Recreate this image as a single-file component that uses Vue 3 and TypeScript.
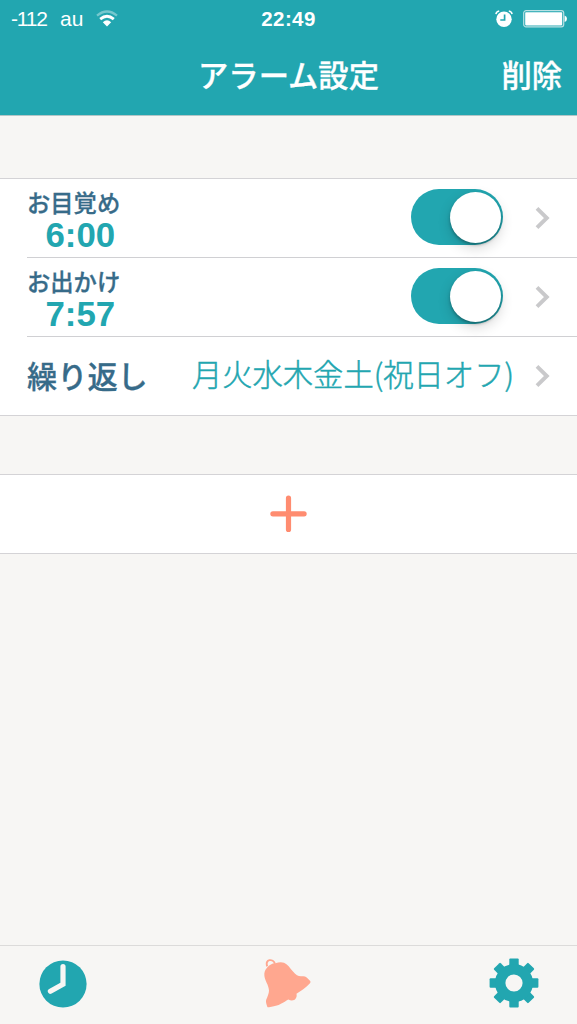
<script setup lang="ts">
import { ref } from 'vue'

interface Alarm {
  label: string
  time: string
  enabled: boolean
}

const alarms = ref<Alarm[]>([
  { label: 'お目覚め', time: '6:00', enabled: true },
  { label: 'お出かけ', time: '7:57', enabled: true },
])

const gearTeeth = [0, 45, 90, 135, 180, 225, 270, 315]
</script>

<template>
  <div class="screen">
    <header class="header">
      <div class="status">
        <div class="status-left">
          <span class="signal">-112</span>
          <span class="carrier">au</span>
          <svg class="wifi" width="22" height="17" viewBox="0 0 22 17">
            <path d="M1 5.6Q11 -2.6 21 5.6" fill="none" stroke="#fff" stroke-opacity=".38" stroke-width="2.3" />
            <path d="M4.2 9.1Q11 3.3 17.8 9.1" fill="none" stroke="#fff" stroke-width="2.8" />
            <path d="M6.8 12.2Q11 8.4 15.2 12.2L11 16.4Z" fill="#fff" />
          </svg>
        </div>
        <span class="clock">22:49</span>
        <div class="status-right">
          <svg class="alarm-icon" width="18" height="18" viewBox="0 0 18 18">
            <circle cx="9" cy="9.2" r="7.7" fill="#fff" />
            <path d="M.9 4.1Q1.4 1.6 4.2 1.1M13.8 1.1Q16.6 1.6 17.1 4.1" fill="none" stroke="#fff" stroke-width="1.5" />
            <path d="M9.6 4.4V10H5.3" fill="none" stroke="#22a6b0" stroke-width="1.7" />
          </svg>
          <svg class="battery" width="44" height="18" viewBox="0 0 44 18">
            <rect x=".7" y=".7" width="40" height="16.2" rx="2.4" fill="none" stroke="#b9e1e4" stroke-width="1.2" />
            <rect x="2.2" y="2.2" width="37" height="13.2" rx=".8" fill="#fff" />
            <path d="M41.6 5.6Q44 6.4 44 8.8T41.6 12Z" fill="#fff" />
          </svg>
        </div>
      </div>
      <div class="nav">
        <h1 class="title">アラーム設定</h1>
        <button class="delete">削除</button>
      </div>
    </header>

    <main class="content">
      <section class="group">
        <div v-for="alarm in alarms" :key="alarm.label" class="row">
          <div class="alarm-text">
            <span class="label">{{ alarm.label }}</span>
            <span class="time">{{ alarm.time }}</span>
          </div>
          <button class="switch" :class="{ on: alarm.enabled }" @click="alarm.enabled = !alarm.enabled">
            <span class="knob"></span>
          </button>
          <svg class="chevron" width="16" height="24" viewBox="0 0 16 24">
            <path d="M2 2.4L11.8 12L2 21.6" fill="none" stroke="#c9c9cb" stroke-width="3.9" />
          </svg>
        </div>
        <div class="row">
          <span class="repeat-label">繰り返し</span>
          <span class="days">月火水木金土(祝日オフ)</span>
          <svg class="chevron" width="16" height="24" viewBox="0 0 16 24">
            <path d="M2 2.4L11.8 12L2 21.6" fill="none" stroke="#c9c9cb" stroke-width="3.9" />
          </svg>
        </div>
      </section>

      <button class="group add">
        <svg width="38" height="38" viewBox="0 0 38 38">
          <path d="M18.5 3.2V34.4M2.9 18.8H34.1" stroke="#ff8c70" stroke-width="5.2" stroke-linecap="round" />
        </svg>
      </button>
    </main>

    <footer class="tabs">
      <svg class="tab-clock" width="48" height="48" viewBox="0 0 48 48">
        <circle cx="24" cy="24" r="23.6" fill="#22a6b0" />
        <path d="M24 6.6V24.2L11.4 31.2" fill="none" stroke="#f7f6f4" stroke-width="5.2" stroke-linecap="round" />
      </svg>
      <svg class="tab-bell" width="50" height="50" viewBox="0 0 50 50">
        <path
          d="M4 8.8C6.5 5.6 10 4 12.5 4.3C15.5 2.9 19 2.9 21 3.7C24.5 5 27 9 30 12.5C33 16 35 17.2 38 17.2C41.5 17.2 43 17.4 44.5 19.3L47.2 22.1Q48 23.2 47 24.2C42.5 29 38 31.8 33.5 34.8C34.6 40 30.5 43.2 25.3 40.6C20.5 43.3 17 47 6 48.2Q4.5 48.6 4.2 47.4C3.5 45.5 2.5 42.5 3.2 40.8C4.5 37.5 6 34.5 6 31.5C5.6 25.5 2 22 1.4 17C1 13.5 1.9 11.1 4 8.8Z"
          fill="#ffa78f"
        />
        <path d="M4.2 7.4C1.6 -.2 10.2 -.7 12 4.7" fill="none" stroke="#ffa78f" stroke-width="1.9" />
      </svg>
      <svg class="tab-gear" width="50" height="50" viewBox="-25 -25 50 50">
        <g fill="#22a6b0">
          <rect
            v-for="angle in gearTeeth"
            :key="angle"
            x="-4.7"
            y="-24.4"
            width="9.4"
            height="11"
            rx="1"
            :transform="`rotate(${angle})`"
          />
        </g>
        <circle r="13.8" fill="none" stroke="#22a6b0" stroke-width="10.4" />
      </svg>
    </footer>
  </div>
</template>

<style>
html,
body {
  background: #f7f6f4;
}
</style>

<style scoped>
.screen {
  display: flex;
  flex-direction: column;
  width: 577px;
  height: 1024px;
  overflow: hidden;
  background: #f7f6f4;
  font-family: "Liberation Sans", "Noto Sans CJK JP", sans-serif;
  white-space: nowrap;
}

button {
  margin: 0;
  padding: 0;
  border: 0;
  background: none;
  font: inherit;
  color: inherit;
}

svg {
  display: block;
  flex: none;
}

.header {
  height: 115px;
  border-bottom: 1px solid #b3c6c7;
  background: #22a6b0;
  color: #fff;
}

.status,
.nav {
  display: grid;
  grid-template-columns: 1fr auto 1fr;
  align-items: center;
}

.status {
  height: 38px;
  font-size: 21px;
}

.status-left,
.status-right {
  display: flex;
  align-items: center;
}

.status-left {
  padding-left: 11px;
}

.signal {
  width: 49px;
  letter-spacing: -1.2px;
}

.carrier {
  width: 36px;
}

.wifi {
  margin-top: -2px;
}

.clock {
  font-weight: bold;
  font-size: 20.5px;
  letter-spacing: 0.4px;
}

.status-right {
  justify-content: flex-end;
  gap: 10px;
  padding-right: 10px;
}

.alarm-icon,
.battery {
  margin-top: -1px;
}

.nav {
  height: 71px;
  font-family: "Noto Sans CJK JP", sans-serif;
  font-size: 30.3px;
  font-weight: 500;
  -webkit-text-stroke: 0.3px #fff;
}

.title {
  grid-column: 2;
  margin: 0;
  font: inherit;
}

.delete {
  justify-self: end;
  padding-right: 15px;
}

.content {
  flex: 1;
  padding-top: 62px;
}

.group {
  box-sizing: border-box;
  width: 100%;
  border-top: 1px solid #d4d3d6;
  border-bottom: 1px solid #d4d3d6;
  background: #fff;
}

.row {
  display: flex;
  align-items: center;
  box-sizing: border-box;
  height: 79px;
  margin-left: 27px;
  padding-right: 26px;
  border-bottom: 1px solid #d0d0d3;
}

.row:last-child {
  height: 78px;
  border-bottom: 0;
}

.alarm-text {
  display: flex;
  flex: 1;
  flex-direction: column;
  padding-top: 5px;
}

.label,
.repeat-label {
  font-family: "Noto Sans CJK JP", sans-serif;
  font-weight: 500;
  color: #376b89;
  -webkit-text-stroke: 0.3px #376b89;
}

.label {
  font-size: 23.3px;
  line-height: 28px;
}

.time {
  padding-left: 18.5px;
  font-size: 34.8px;
  font-weight: bold;
  line-height: 37px;
  color: #22a6b0;
}

.switch {
  display: flex;
  align-items: center;
  box-sizing: border-box;
  width: 92px;
  height: 56px;
  margin: -2px 32px 0 0;
  padding: 0 2px;
  border-radius: 28px;
  background: #ddd;
}

.switch.on {
  justify-content: flex-end;
  background: #22a6b0;
}

.knob {
  width: 51px;
  height: 51px;
  border-radius: 50%;
  background: #fff;
  box-shadow: 0 2px 3px rgba(0, 0, 0, 0.28), 0 5px 13px rgba(0, 0, 0, 0.16);
}

.chevron {
  margin-top: 0;
}

.repeat-label {
  flex: 1;
  margin-top: -3px;
  font-size: 30.2px;
}

.days {
  margin: -6px 21px 0 0;
  font-family: "Noto Sans CJK JP", sans-serif;
  font-size: 30.3px;
  font-weight: 300;
  color: #22a6b0;
  -webkit-text-stroke: 0.45px #22a6b0;
}

.add {
  display: flex;
  align-items: center;
  justify-content: center;
  height: 80px;
  margin-top: 58px;
}

.tabs {
  display: flex;
  align-items: center;
  justify-content: space-between;
  box-sizing: border-box;
  height: 79px;
  padding: 0 38px 0 39px;
  border-top: 1px solid #dcdbda;
}

.tab-clock {
  margin-top: -2px;
}

.tab-bell {
  margin-top: -2px;
}

.tab-gear {
  margin-top: -5px;
}
</style>
